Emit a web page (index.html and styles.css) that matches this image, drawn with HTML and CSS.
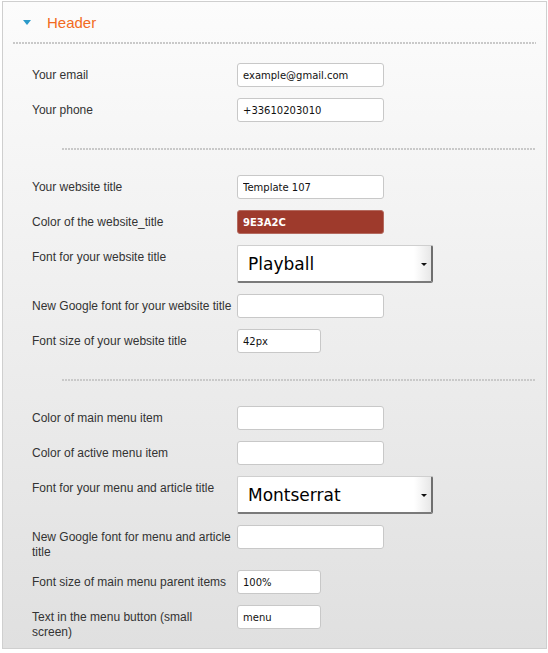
FILE: index.html
```html
<!DOCTYPE html>
<html lang="en">
<head>
    <meta charset="UTF-8">
    <title>Template options</title>
    <link rel="stylesheet" href="styles.css">
</head>
<body>
<div class="panel">
    <div class="panel-head">
        <span class="caret"></span>
        <h2>Header</h2>
    </div>
    <div class="rule rule-top"></div>

    <form class="panel-body">
        <div class="field">
            <label>Your email</label>
            <input type="text" value="example@gmail.com">
        </div>
        <div class="field">
            <label>Your phone</label>
            <input type="text" value="+33610203010">
        </div>

        <div class="rule"></div>

        <div class="field">
            <label>Your website title</label>
            <input type="text" value="Template 107">
        </div>
        <div class="field">
            <label>Color of the website_title</label>
            <input type="text" class="color-input" value="9E3A2C">
        </div>
        <div class="field">
            <label>Font for your website title</label>
            <div class="select-wrap">
                <select><option>Playball</option></select>
            </div>
        </div>
        <div class="field">
            <label>New Google font for your website title</label>
            <input type="text" value="">
        </div>
        <div class="field">
            <label>Font size of your website title</label>
            <input type="text" class="short" value="42px">
        </div>

        <div class="rule"></div>

        <div class="field">
            <label>Color of main menu item</label>
            <input type="text" value="">
        </div>
        <div class="field">
            <label>Color of active menu item</label>
            <input type="text" value="">
        </div>
        <div class="field">
            <label>Font for your menu and article title</label>
            <div class="select-wrap">
                <select><option>Montserrat</option></select>
            </div>
        </div>
        <div class="field">
            <label>New Google font for menu and article title</label>
            <input type="text" value="">
        </div>
        <div class="field">
            <label>Font size of main menu parent items</label>
            <input type="text" class="short" value="100%">
        </div>
        <div class="field">
            <label>Text in the menu button (small screen)</label>
            <input type="text" class="short" value="menu">
        </div>
    </form>
</div>
</body>
</html>
```

FILE: styles.css
```css
body {
    margin: 1px 1px 0 2px;
    background: #fff;
    font-family: "Liberation Sans", Arial, sans-serif;
}

.panel {
    border: 1px solid #cfcfcf;
    background: linear-gradient(#fcfcfc, #e0e0e0);
}

/* titre du bloc */
.panel-head {
    display: flex;
    align-items: center;
    height: 40px;
    padding-left: 20px;
}

.caret {
    width: 0;
    height: 0;
    border-left: 4px solid transparent;
    border-right: 4px solid transparent;
    border-top: 5px solid #2b9ac9;
    margin-right: 16px;
    margin-top: 1px;
}

.panel-head h2 {
    margin: 0;
    font-size: 15px;
    font-weight: normal;
    color: #f26b21;
}

/* lignes pointillees */
.rule {
    height: 2px;
    margin: 26px 10px 25px 30px;
    background: repeating-linear-gradient(to right, #c9c9c9 0 2px, transparent 2px 3px);
}

.rule-top {
    margin: 0 10px 0 10px;
}

.panel-body {
    padding: 19px 0 0 29px;
}

.field {
    display: flex;
    align-items: flex-start;
    margin-bottom: 11px;
}

.field:last-child {
    margin-bottom: 9px;
}

.field label {
    flex: 0 0 201px;
    margin: 0 4px -1px 0;
    padding-top: 5px;
    font-size: 12px;
    line-height: 15px;
    color: #333;
}

.field input {
    box-sizing: border-box;
    width: 147px;
    height: 24px;
    margin: 0;
    padding: 0 5px;
    border: 1px solid #c8c8c8;
    border-radius: 3px;
    background: #fff;
    font-family: "DejaVu Sans", sans-serif;
    font-size: 10px;
    color: #111;
}

.field input.short {
    width: 84px;
}

.field input.color-input {
    background: #9e3a2c;
    border-color: #b46a5f;
    color: #fff;
    font-weight: bold;
}

/* liste deroulante */
.select-wrap {
    position: relative;
    width: 196px;
    height: 38px;
}

.select-wrap select {
    -webkit-appearance: none;
    appearance: none;
    box-sizing: border-box;
    width: 196px;
    height: 38px;
    margin: 0;
    padding: 0 0 0 10px;
    border: 1px solid #cfcfcf;
    border-right: 2px solid #6f6f6f;
    border-bottom: 2px solid #7a7a7a;
    border-radius: 2px;
    background: linear-gradient(to right, #fff 0, #fff 176px, #e6e6e6 194px);
    font-family: "DejaVu Sans", sans-serif;
    font-size: 17px;
    color: #000;
}

.select-wrap::after {
    content: "";
    position: absolute;
    right: 6px;
    top: 18px;
    border-left: 3px solid transparent;
    border-right: 3px solid transparent;
    border-top: 3px solid #111;
}
```
